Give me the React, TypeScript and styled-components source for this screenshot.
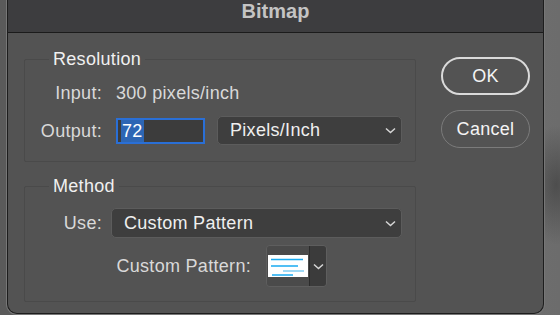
import styled, { createGlobalStyle } from "styled-components";

const GlobalStyle = createGlobalStyle`
    html, body {
        margin: 0;
        padding: 0;
    }
    body {
        width: 560px;
        height: 315px;
        overflow: hidden;
        font-family: "Liberation Sans", Arial, sans-serif;
        background:
            radial-gradient(ellipse 30px 60px at 556px 185px, rgba(40, 40, 40, 0.45), transparent),
            linear-gradient(90deg, #5a5a5a 0, #5a5a5a 50%, #787878 50%, #6c6c6c 100%);
    }
`;

const Page = styled.div`
    display: flex;
    height: 315px;
    padding-left: 7px;
    box-sizing: border-box;
`;

const Dialog = styled.div`
    width: 537px;
    height: 314px;
    box-sizing: border-box;
    display: flex;
    flex-direction: column;
    background: #535353;
    border: 1px solid #1d1d1d;
    border-top: 0;
    border-radius: 0 0 10px 10px;
    box-shadow: 0 0 0 1px #777777;
    overflow: hidden;
    letter-spacing: 0.3px;
`;

const TitleBar = styled.div`
    flex: none;
    height: 32px;
    background: #3d3d3f;
    border-bottom: 1px solid #1b1b1b;
    text-align: center;
    font-size: 20px;
    line-height: 22px;
    font-weight: 700;
    letter-spacing: 0;
    color: #c4c4c4;
`;

const Body = styled.div`
    display: flex;
    gap: 25px;
    padding: 15px 13px 0 16px;
`;

const Groups = styled.div`
    width: 392px;
    display: flex;
    flex-direction: column;
    gap: 13px;
`;

const Group = styled.fieldset<{ $bottom: number }>`
    margin: 0;
    min-width: 0;
    padding: 11px 13px ${(p) => p.$bottom}px 0;
    border: 1px solid #4a4a4a;
    border-radius: 2px;
`;

const Legend = styled.legend`
    margin-left: 24px;
    padding: 0 4px;
    font-size: 18px;
    line-height: 22px;
    color: #f0f0f0;
`;

const Form = styled.div<{ $label: number; $gap: number }>`
    display: grid;
    grid-template-columns: ${(p) => p.$label}px auto;
    column-gap: ${(p) => p.$gap}px;
    align-items: center;
`;

const Rows = styled.div<{ $gap: number }>`
    display: flex;
    flex-direction: column;
    gap: ${(p) => p.$gap}px;
`;

const Label = styled.div`
    text-align: right;
    white-space: nowrap;
    font-size: 18px;
    line-height: 24px;
    color: #d9d9d9;
`;

const Value = styled.div`
    font-size: 18px;
    line-height: 24px;
    color: #d9d9d9;
`;

const Controls = styled.div`
    display: flex;
    align-items: center;
    gap: 12px;
`;

const TextField = styled.div`
    width: 89px;
    height: 26px;
    box-sizing: border-box;
    display: flex;
    align-items: center;
    padding-left: 3px;
    background: #3c3c3c;
    border: 2px solid #2a6fd6;
    font-size: 18px;
`;

const Selected = styled.span`
    background: #2d66b4;
    color: #ffffff;
    line-height: 22px;
    padding: 0 1px;
`;

const Select = styled.div<{ $width: number; $height: number }>`
    width: ${(p) => p.$width}px;
    height: ${(p) => p.$height}px;
    box-sizing: border-box;
    display: flex;
    align-items: center;
    justify-content: space-between;
    padding: 0 5px 0 12px;
    background: #3e3e3e;
    border: 1px solid #5c5c5c;
    border-radius: 5px;
    font-size: 18px;
    color: #efefef;
`;

const Swatch = styled.div`
    width: 61px;
    height: 42px;
    box-sizing: border-box;
    display: flex;
    border: 1px solid #5e5e5e;
    border-radius: 4px;
    overflow: hidden;
`;

const SwatchPreview = styled.div`
    width: 42px;
    display: flex;
    align-items: center;
    padding-left: 1px;
    box-sizing: border-box;
    background: #4a4a4a;
`;

const SwatchArrow = styled.div`
    flex: 1;
    display: flex;
    align-items: center;
    justify-content: center;
    background: #3b3b3b;
    border-left: 1px solid #2c2c2c;
`;

const Buttons = styled.div`
    width: 89px;
    display: flex;
    flex-direction: column;
    gap: 15px;
    padding-top: 9px;
`;

const Button = styled.button<{ $primary?: boolean }>`
    height: 38px;
    box-sizing: border-box;
    border-radius: 19px;
    background: transparent;
    border: ${(p) => (p.$primary ? "2px solid #dadada" : "1.5px solid #7b7b7b")};
    color: #f4f4f4;
    font-family: inherit;
    font-size: 18px;
    letter-spacing: 0.3px;
    padding: 0;
`;

function Chevron() {
    return (
        <svg width="11" height="7" viewBox="0 0 11 7">
            <polyline points="1,1.5 5.5,5.5 10,1.5" fill="none" stroke="#d6d6d6" strokeWidth="1.5" />
        </svg>
    );
}

function PatternPreview() {
    return (
        <svg width="40" height="22" viewBox="0 0 40 22">
            <rect width="40" height="22" fill="#ffffff" />
            <line x1="3" y1="4.5" x2="35" y2="4.5" stroke="#18aaf0" strokeWidth="1.6" />
            <line x1="3" y1="11" x2="30" y2="11" stroke="#18aaf0" strokeWidth="1.6" />
            <line x1="15" y1="16" x2="36" y2="16" stroke="#7fcdf2" strokeWidth="1.4" />
            <line x1="4" y1="20" x2="25" y2="20" stroke="#18aaf0" strokeWidth="1.6" />
        </svg>
    );
}

export default function App() {
    return (
        <>
            <GlobalStyle />
            <Page>
                <Dialog>
                    <TitleBar>Bitmap</TitleBar>
                    <Body>
                        <Groups>
                            <Group $bottom={16}>
                                <Legend>Resolution</Legend>
                                <Rows $gap={11}>
                                    <Form $label={77} $gap={14}>
                                        <Label>Input:</Label>
                                        <Value>300 pixels/inch</Value>
                                    </Form>
                                    <Form $label={77} $gap={14}>
                                        <Label>Output:</Label>
                                        <Controls>
                                            <TextField>
                                                <Selected>72</Selected>
                                            </TextField>
                                            <Select $width={185} $height={29}>
                                                <span>Pixels/Inch</span>
                                                <Chevron />
                                            </Select>
                                        </Controls>
                                    </Form>
                                </Rows>
                            </Group>

                            <Group $bottom={14}>
                                <Legend>Method</Legend>
                                <Rows $gap={7}>
                                    <Form $label={77} $gap={9}>
                                        <Label>Use:</Label>
                                        <Select $width={291} $height={30}>
                                            <span>Custom Pattern</span>
                                            <Chevron />
                                        </Select>
                                    </Form>
                                    <Form $label={226} $gap={15}>
                                        <Label>Custom Pattern:</Label>
                                        <Swatch>
                                            <SwatchPreview>
                                                <PatternPreview />
                                            </SwatchPreview>
                                            <SwatchArrow>
                                                <Chevron />
                                            </SwatchArrow>
                                        </Swatch>
                                    </Form>
                                </Rows>
                            </Group>
                        </Groups>

                        <Buttons>
                            <Button $primary>OK</Button>
                            <Button>Cancel</Button>
                        </Buttons>
                    </Body>
                </Dialog>
            </Page>
        </>
    );
}
